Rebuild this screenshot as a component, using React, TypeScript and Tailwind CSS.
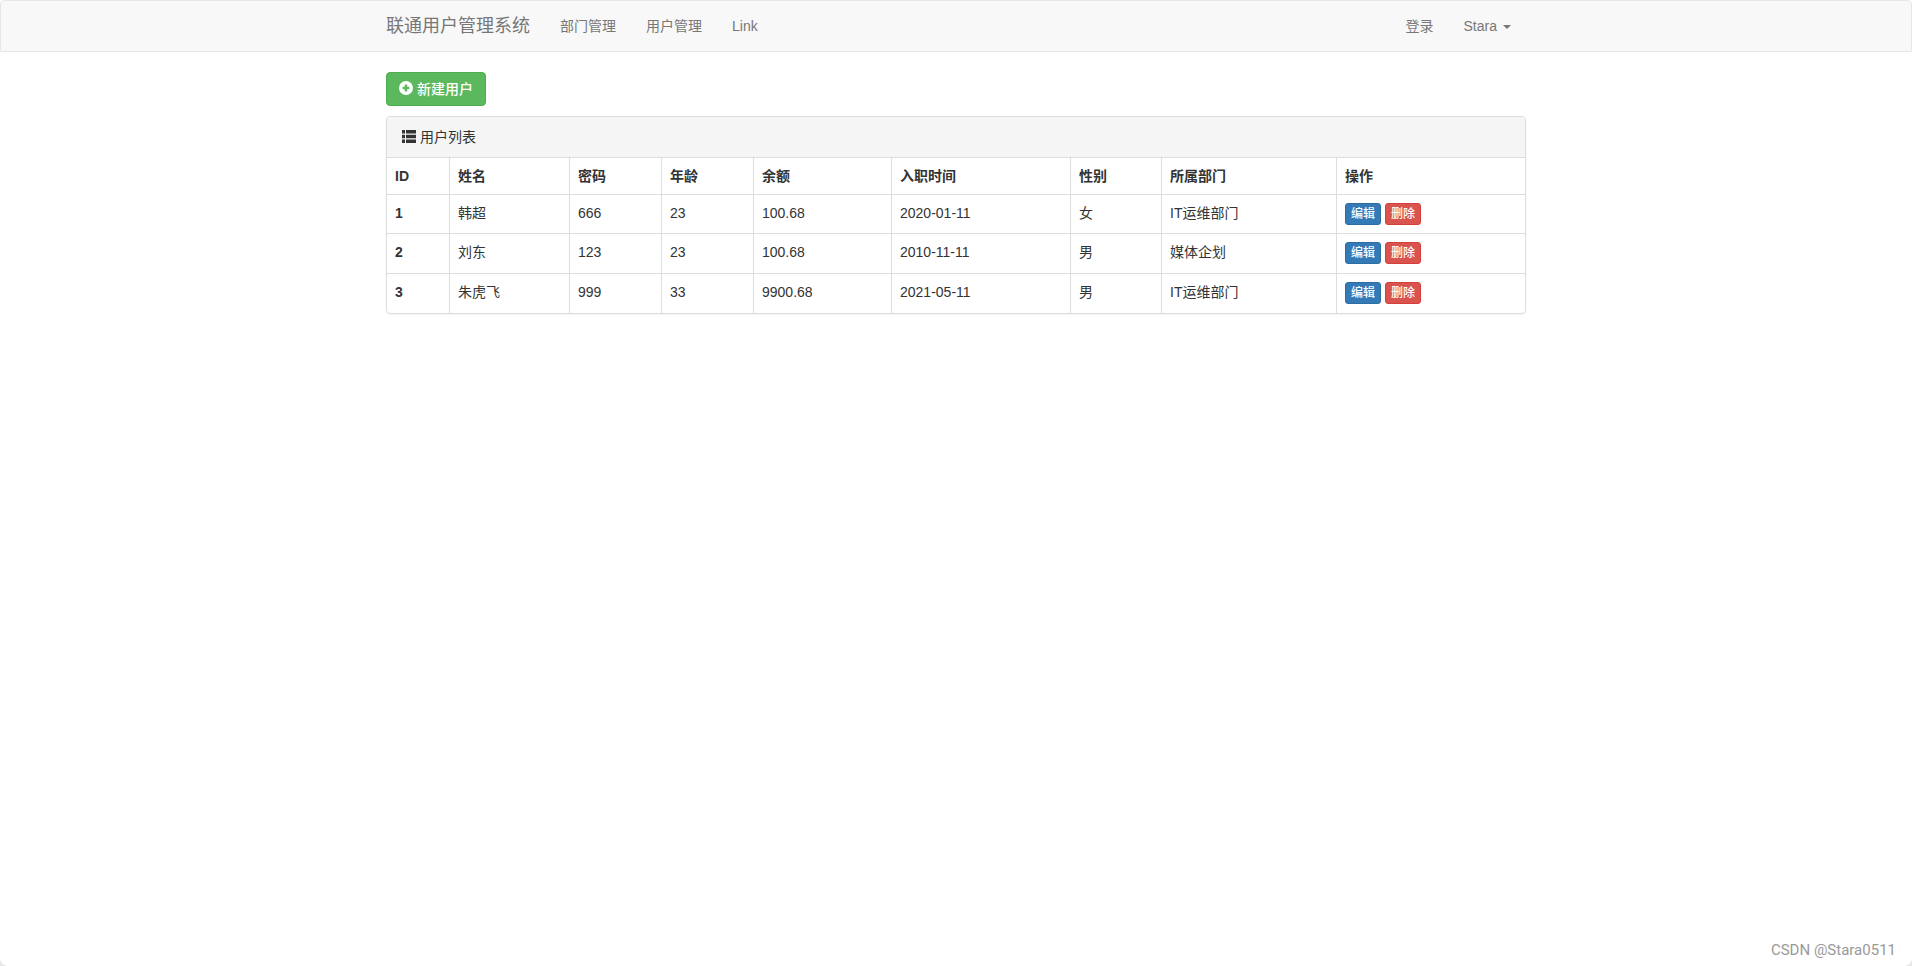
import React from "react";

const navLinks = ["部门管理", "用户管理", "Link"];

const columns = [
  { label: "ID", width: "w-[63px]" },
  { label: "姓名", width: "w-[120px]" },
  { label: "密码", width: "w-[92px]" },
  { label: "年龄", width: "w-[92px]" },
  { label: "余额", width: "w-[138px]" },
  { label: "入职时间", width: "w-[179px]" },
  { label: "性别", width: "w-[91px]" },
  { label: "所属部门", width: "w-[175px]" },
  { label: "操作", width: "" },
];

const users = [
  { id: 1, name: "韩超", password: "666", age: 23, account: "100.68", joined: "2020-01-11", gender: "女", depart: "IT运维部门" },
  { id: 2, name: "刘东", password: "123", age: 23, account: "100.68", joined: "2010-11-11", gender: "男", depart: "媒体企划" },
  { id: 3, name: "朱虎飞", password: "999", age: 33, account: "9900.68", joined: "2021-05-11", gender: "男", depart: "IT运维部门" },
];

function PlusSign() {
  return (
    <svg viewBox="0 0 14 14" className="mb-0.5 size-3.5" fill="currentColor" aria-hidden="true">
      <path
        fillRule="evenodd"
        d="M7 0a7 7 0 1 1 0 14A7 7 0 0 1 7 0ZM5.8 3.6v2.2H3.6v2.4h2.2v2.2h2.4V8.2h2.2V5.8H8.2V3.6Z"
      />
    </svg>
  );
}

function ListIcon() {
  return (
    <svg viewBox="0 0 14 14" className="size-3.5" fill="currentColor" aria-hidden="true">
      <path d="M0 0h3v3.5H0zM4 0h10v3.5H4zM0 4.7h3v3.6H0zM4 4.7h10v3.6H4zM0 9.5h3V13H0zM4 9.5h10V13H4z" />
    </svg>
  );
}

function Navbar() {
  return (
    <nav className="mb-5 rounded-t border border-[#e7e7e7] bg-[#f8f8f8] text-[#777]">
      <div className="mx-auto flex h-[50px] max-w-[1170px] items-center px-[15px]">
        <a href="#" className="mr-[15px] text-lg leading-5">
          联通用户管理系统
        </a>
        {navLinks.map((link) => (
          <a key={link} href="#" className="p-[15px]">
            {link}
          </a>
        ))}
        <div className="ml-auto flex">
          <a href="#" className="p-[15px]">
            登录
          </a>
          <button type="button" className="flex items-center gap-1.5 p-[15px]">
            Stara
            <span className="mt-0.5 border-x-4 border-t-4 border-x-transparent border-t-[#777]" />
          </button>
        </div>
      </div>
    </nav>
  );
}

function UserTable() {
  return (
    <table className="w-full table-fixed border-separate border-spacing-0 text-left">
      <thead>
        <tr>
          {columns.map((col) => (
            <th
              key={col.label}
              className={`${col.width} h-[37px] border-r border-b border-[#ddd] px-2 font-bold last:border-r-0`}
            >
              {col.label}
            </th>
          ))}
        </tr>
      </thead>
      <tbody className="[&_td]:border-b [&_td]:border-[#ddd] [&_td:not(:last-child)]:border-r [&_tr:last-child>*]:border-b-0">
        {users.map((user) => (
          <tr key={user.id} className="h-[39px] align-top even:h-10 [&>*]:px-2 [&>*]:pt-2">
            <th scope="row" className="border-r border-b border-[#ddd] font-bold">
              {user.id}
            </th>
            <td>{user.name}</td>
            <td>{user.password}</td>
            <td>{user.age}</td>
            <td>{user.account}</td>
            <td>{user.joined}</td>
            <td>{user.gender}</td>
            <td>{user.depart}</td>
            <td>
              <div className="flex gap-1 text-xs leading-[18px] font-medium text-white">
                <a href="#" className="rounded-[3px] border border-[#2e6da4] bg-[#337ab7] px-[5px] py-px">
                  编辑
                </a>
                <a href="#" className="rounded-[3px] border border-[#d43f3a] bg-[#d9534f] px-[5px] py-px">
                  删除
                </a>
              </div>
            </td>
          </tr>
        ))}
      </tbody>
    </table>
  );
}

export default function App() {
  return (
    <div className="bg-[#e7e7e7]">
      <div className="flex min-h-screen flex-col rounded-b-lg bg-white font-['Liberation_Sans','Noto_Sans_CJK_SC',sans-serif] text-sm leading-5 text-[#333]">
        <Navbar />
        <main className="mx-auto w-full max-w-[1170px] px-[15px]">
          <a
            href="#"
            className="mb-2.5 inline-flex h-[34px] items-center gap-1 rounded border border-[#4cae4c] bg-[#5cb85c] px-3 font-medium text-white"
          >
            <PlusSign />
            新建用户
          </a>
          <section className="overflow-hidden rounded border border-[#ddd] shadow-xs">
            <header className="flex h-[41px] items-center gap-1 border-b border-[#ddd] bg-[#f5f5f5] px-[15px] pb-px">
              <ListIcon />
              用户列表
            </header>
            <UserTable />
          </section>
        </main>
        <footer className="mt-auto flex justify-end px-4 pb-1 font-[Roboto,sans-serif] text-[15px] leading-6 text-[#999]">
          CSDN @Stara0511
        </footer>
      </div>
    </div>
  );
}
